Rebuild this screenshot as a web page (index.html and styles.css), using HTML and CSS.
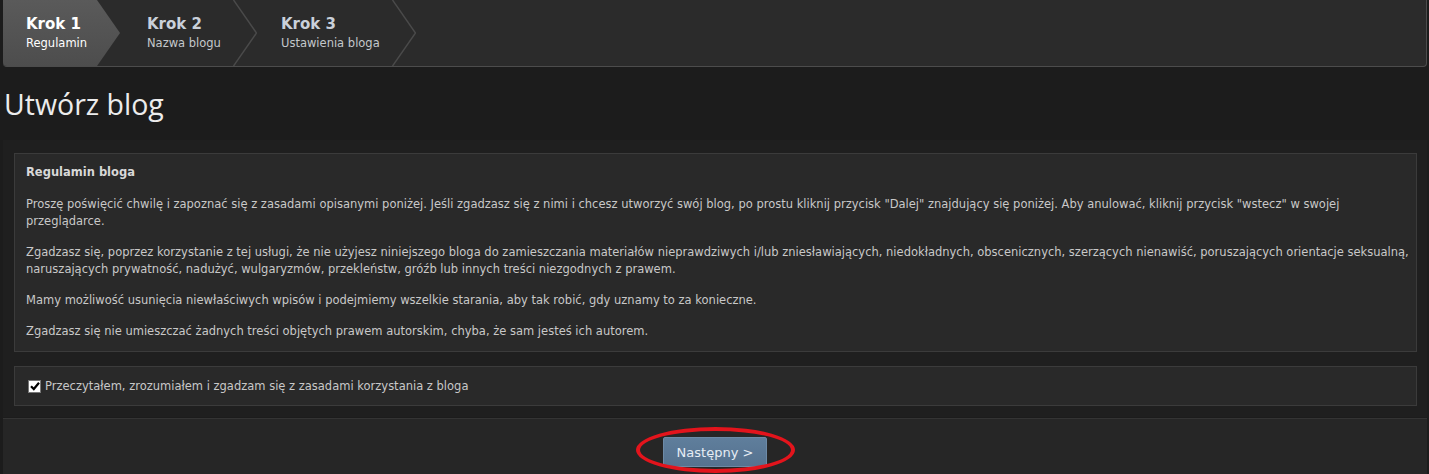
FILE: index.html
```html
<!DOCTYPE html>
<html lang="pl">
<head>
<meta charset="utf-8">
<title>Utwórz blog</title>
<link rel="stylesheet" href="styles.css">
</head>
<body>
<div class="page">
  <nav class="steps">
    <div class="step step-active">
      <div class="step-title">Krok 1</div>
      <div class="step-sub">Regulamin</div>
    </div>
    <div class="step step-2">
      <div class="step-title">Krok 2</div>
      <div class="step-sub">Nazwa blogu</div>
    </div>
    <svg class="chev" width="24" height="66" viewBox="0 0 24 66"><polyline points="0.5,0 23.5,33 0.5,66" fill="none" stroke="#4a4a4a" stroke-width="1.5"/></svg>
    <div class="step step-3">
      <div class="step-title">Krok 3</div>
      <div class="step-sub">Ustawienia bloga</div>
    </div>
    <svg class="chev" width="24" height="66" viewBox="0 0 24 66"><polyline points="0.5,0 23.5,33 0.5,66" fill="none" stroke="#4a4a4a" stroke-width="1.5"/></svg>
  </nav>

  <h1 class="heading">Utwórz blog</h1>

  <section class="content">
    <div class="panel rules">
      <div class="rules-title">Regulamin bloga</div>
      <p>Proszę poświęcić chwilę i zapoznać się z zasadami opisanymi poniżej. Jeśli zgadzasz się z nimi i chcesz utworzyć swój blog, po prostu kliknij przycisk "Dalej" znajdujący się poniżej. Aby anulować, kliknij przycisk "wstecz" w swojej przeglądarce.</p>
      <p>Zgadzasz się, poprzez korzystanie z tej usługi, że nie użyjesz niniejszego bloga do zamieszczania materiałów nieprawdziwych i/lub zniesławiających, niedokładnych, obscenicznych, szerzących nienawiść, poruszających orientacje seksualną, naruszających prywatność, nadużyć, wulgaryzmów, przekleństw, gróźb lub innych treści niezgodnych z prawem.</p>
      <p>Mamy możliwość usunięcia niewłaściwych wpisów i podejmiemy wszelkie starania, aby tak robić, gdy uznamy to za konieczne.</p>
      <p>Zgadzasz się nie umieszczać żadnych treści objętych prawem autorskim, chyba, że sam jesteś ich autorem.</p>
    </div>
    <div class="panel agree">
      <label class="agree-label">
        <span class="checkbox"><svg width="10" height="10" viewBox="0 0 10 10"><path d="M1 5.2 L3.8 8 L9 1.8" fill="none" stroke="#000" stroke-width="2.2"/></svg></span>
        Przeczytałem, zrozumiałem i zgadzam się z zasadami korzystania z bloga
      </label>
    </div>
  </section>

  <footer class="footer">
    <div class="btn-wrap">
      <button class="btn">Następny &gt;</button>
      <span class="ring"></span>
    </div>
  </footer>
</div>
</body>
</html>
```

FILE: styles.css
```css
html, body {
  margin: 0;
  padding: 0;
  background: #1c1c1c;
  height: 100%;
  overflow: hidden;
}

.page {
  padding: 0 2px 0 3px;
  font-family: "DejaVu Sans", Verdana, sans-serif;
  font-size: 11.5px;
  color: #c8c8c8;
}

.steps {
  display: flex;
  align-items: stretch;
  height: 66px;
  background: #2b2b2b;
  border-bottom: 1px solid #4c4c4c;
  border-right: 1px solid #4c4c4c;
  border-radius: 0 0 4px 4px;
}

.step {
  display: flex;
  flex-direction: column;
  justify-content: center;
  gap: 3px;
  padding-bottom: 2px;
}

.step-title {
  font-weight: bold;
  font-size: 15px;
  color: #c9d0da;
}

.step-sub {
  font-size: 11.5px;
  color: #c4c8cc;
}

.step-active {
  width: 94px;
  padding-left: 23px;
  background: linear-gradient(#5a5a5a, #4d4d4d);
  clip-path: polygon(0 0, calc(100% - 23px) 0, 100% 50%, calc(100% - 23px) 100%, 0 100%);
  border-radius: 0 0 0 4px;
}

.step-active .step-title,
.step-active .step-sub {
  color: #ffffff;
}

.step-2 {
  width: 86px;
  padding-left: 27px;
}

.step-3 {
  width: 111px;
  padding-left: 24px;
}

.chev {
  display: block;
  flex: none;
}

.heading {
  margin: 0;
  padding: 17px 0 16px 1px;
  font-family: "Open Sans", "Liberation Sans", sans-serif;
  font-weight: normal;
  font-size: 28.5px;
  line-height: 40px;
  color: #ececec;
}

.content {
  background: #1f1f1f;
  padding: 13px 10px 11px 11px;
  display: flex;
  flex-direction: column;
  gap: 14px;
}

.panel {
  background: #292929;
  border: 1px solid #3b3b3b;
}

.rules {
  padding: 10px 4px 11px 11px;
}

.rules-title {
  font-weight: bold;
  color: #d8d8d8;
  line-height: 17px;
  margin-bottom: 15px;
}

.rules p {
  margin: 0 0 14px 0;
  line-height: 17px;
}

.rules p:last-child {
  margin-bottom: 0;
}

.agree {
  height: 38px;
  display: flex;
  align-items: center;
  padding-left: 13px;
}

.agree-label {
  display: flex;
  align-items: center;
  gap: 4px;
}

.checkbox {
  width: 11px;
  height: 11px;
  background: #fff;
  border: 1px solid #777;
  display: flex;
  align-items: center;
  justify-content: center;
}

.footer {
  margin-top: 1px;
  background: #262626;
  border-top: 1px solid #343434;
  height: 60px;
  display: flex;
  justify-content: center;
}

.btn-wrap {
  position: relative;
  margin-top: 18px;
  height: 30px;
}

.btn {
  width: 104px;
  height: 30px;
  background: linear-gradient(#5f7e9c, #56728f);
  border: 1px solid #6d8aa6;
  border-radius: 2px;
  color: #e6edf4;
  font-family: "DejaVu Sans", Verdana, sans-serif;
  font-size: 13px;
  padding: 0;
}

.ring {
  position: absolute;
  box-sizing: border-box;
  left: -27px;
  top: -10px;
  width: 159px;
  height: 46px;
  border: 4px solid #e3141c;
  border-radius: 50%;
}
```
